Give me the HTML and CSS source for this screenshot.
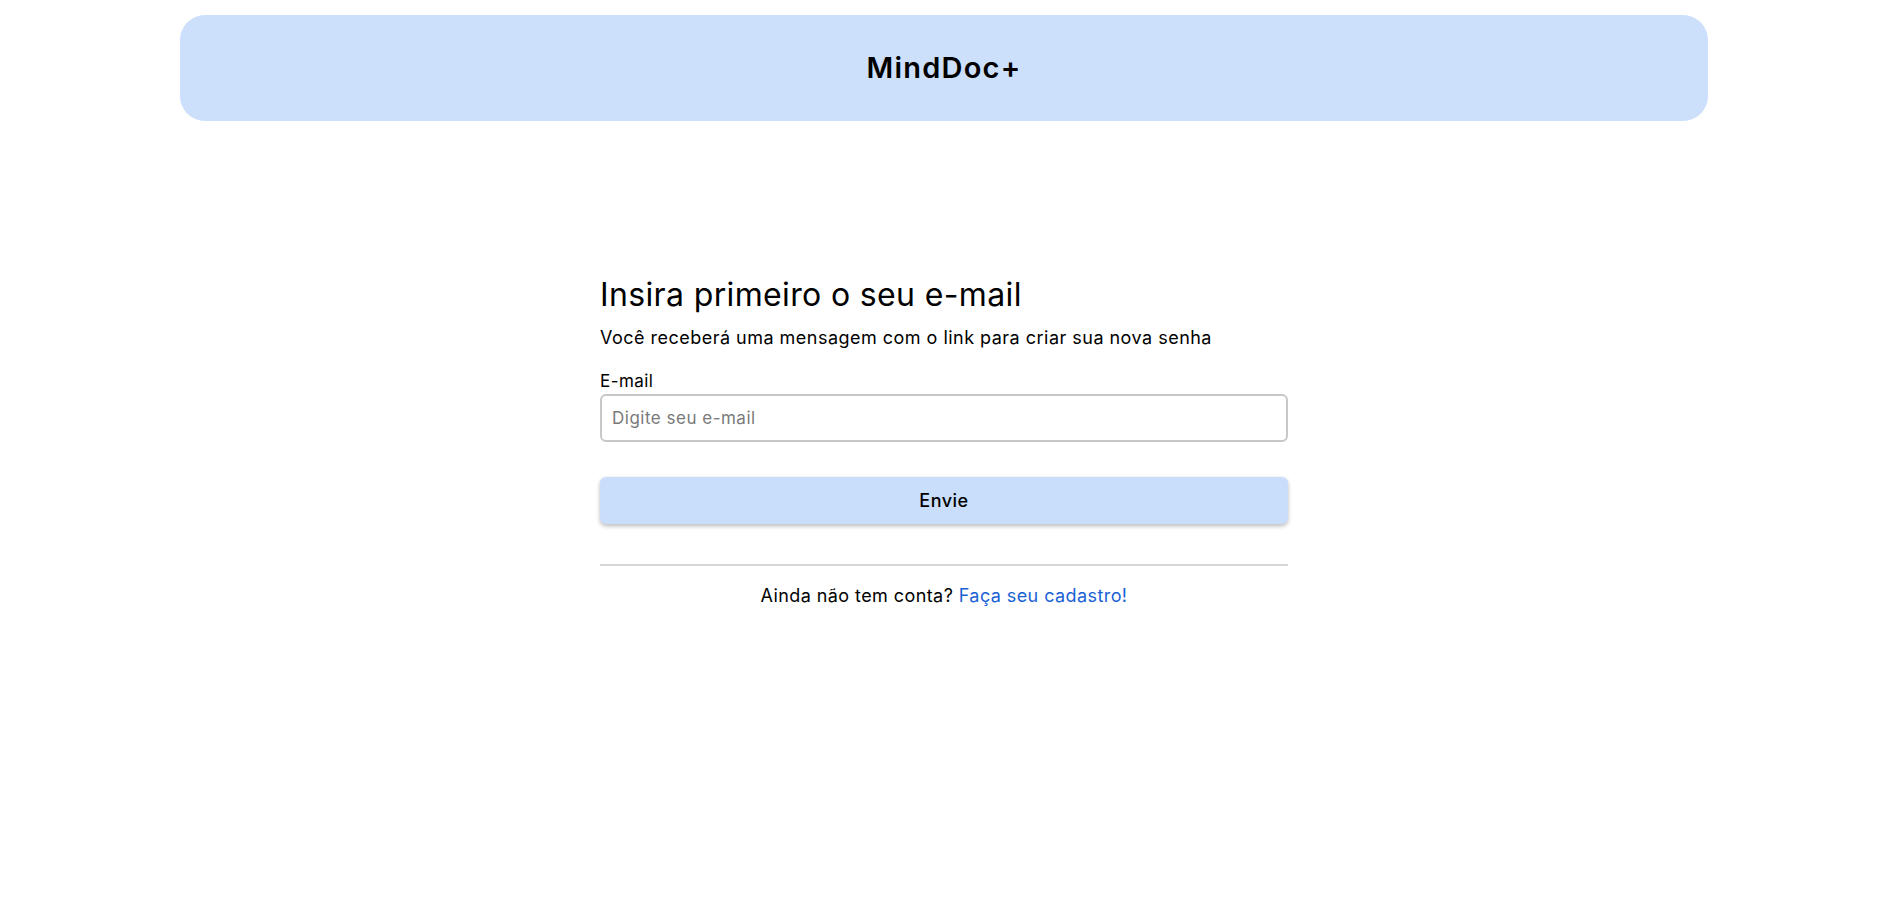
FILE: index.html
```html
<!DOCTYPE html>
<html lang="pt-BR">
<head>
<meta charset="utf-8">
<title>MindDoc+</title>
<link rel="stylesheet" href="styles.css">
</head>
<body>
<header class="topbar">
  <h1 class="brand">MindDoc+</h1>
</header>
<main class="page">
  <form class="card">
    <h2 class="title">Insira primeiro o seu e-mail</h2>
    <p class="subtitle">Você receberá uma mensagem com o link para criar sua nova senha</p>
    <label class="label" for="email">E-mail</label>
    <input class="input" id="email" type="email" placeholder="Digite seu e-mail">
    <button class="btn" type="button">Envie</button>
    <hr class="divider">
    <p class="footer">Ainda não tem conta? <a class="link" href="#">Faça seu cadastro!</a></p>
  </form>
</main>
</body>
</html>
```
FILE: styles.css
```css
* { box-sizing: border-box; }
html, body { margin: 0; padding: 0; background: #ffffff; }
body {
  font-family: "Inter", "Open Sans", "Liberation Sans", sans-serif;
  color: #000;
  letter-spacing: 0.45px;
  padding-left: 2px;
}
.topbar {
  width: 1528px;
  height: 106px;
  margin: 15px auto 0;
  background: #cce0fb;
  border-radius: 25px;
  display: flex;
  align-items: center;
  justify-content: center;
}
.brand {
  margin: 0;
  font-size: 29px;
  line-height: 36px;
  font-weight: 600;
  letter-spacing: 1.2px;
}
.page {
  display: flex;
  justify-content: center;
  padding-top: 154px;
}
.card {
  width: 688px;
  display: flex;
  flex-direction: column;
}
.title {
  margin: 0;
  font-size: 32px;
  line-height: 40px;
  font-weight: 400;
  letter-spacing: 0.36px;
}
.subtitle {
  margin: 11px 0 0;
  font-size: 18px;
  line-height: 24px;
  letter-spacing: 0.48px;
}
.label {
  margin-top: 20px;
  font-size: 17px;
  line-height: 22px;
}
.input {
  margin-top: 2px;
  height: 48px;
  border: 2px solid #c8c8c8;
  border-radius: 6px;
  padding: 0 10px;
  font: inherit;
  font-size: 17px;
  letter-spacing: 0.5px;
}
.input::placeholder { color: #7a7a7a; }
.btn {
  margin-top: 35px;
  height: 47px;
  border: none;
  border-radius: 6px;
  background: #c9defa;
  box-shadow: 0 2px 4px rgba(0,0,0,0.28);
  font: inherit;
  font-size: 18px;
  font-weight: 500;
  letter-spacing: 0.5px;
  color: #000;
}
.divider {
  margin: 40px 0 0;
  border: none;
  height: 2px;
  background: #d6d6d6;
}
.footer {
  margin: 18px 0 0;
  text-align: center;
  font-size: 18px;
  line-height: 24px;
  letter-spacing: 0.42px;
}
.link { color: #1a62d4; text-decoration: none; }
```
